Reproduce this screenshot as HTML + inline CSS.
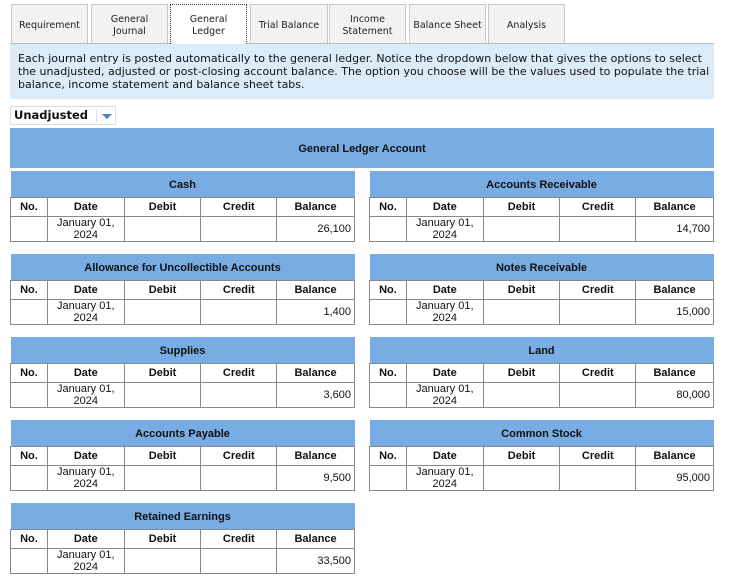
<!DOCTYPE html>
<html><head><style>
body{margin:0;background:#fff;width:731px;height:577px;position:relative;font-family:"Liberation Sans",Arial,sans-serif;overflow:hidden}
.tab{position:absolute;top:4px;height:39px;background:#f2f2f2;border:1px solid #c8c8c8;border-bottom:none;font-family:"DejaVu Sans",sans-serif;font-size:9.5px;color:#222;display:flex;align-items:center;justify-content:center;text-align:center;line-height:12px;box-sizing:border-box;padding-top:3px}
.tab.act{background:#fff;border:1px dotted #445;border-bottom:none;height:40px;z-index:2}
.line{position:absolute;left:10px;top:43px;width:704px;border-top:1px solid #bbb}
.info{position:absolute;left:10px;top:44px;height:55px;background:#dbecf8;font-family:"DejaVu Sans",sans-serif;font-size:11px;line-height:13px;color:#111;padding:8px 0 0 8px;box-sizing:border-box;width:704px}
.dd{position:absolute;left:10px;top:106px;width:106px;height:19px;border:1px solid #ddd;box-sizing:border-box;font-family:"DejaVu Sans",sans-serif;font-weight:bold;font-size:11.5px;padding:1px 0 0 3px;color:#111}
.dd .sep{position:absolute;left:85px;top:2px;width:1px;height:13px;background:#ddd}
.dd .arr{position:absolute;left:91px;top:7px;border-left:5px solid transparent;border-right:5px solid transparent;border-top:5px solid #4a7ec0}
.mh{position:absolute;left:10px;top:128px;width:704px;height:40px;background:#78ace3;font-weight:bold;font-size:11px;text-align:center;line-height:42px;color:#111}
table{position:absolute;border-collapse:collapse;width:345px;font-size:11px;color:#111}
td,th{border:1px solid #888;padding:0}
.t th{background:#78ace3;height:24px;border:none;font-weight:bold;border-bottom:1px solid #888;padding-top:2px}
.c td{height:18px;text-align:center;font-weight:bold}
.d td{height:24px;text-align:center;line-height:12px}
.d td.b{text-align:right;padding-right:3px}
</style></head><body>
<div class="tab" style="left:11px;width:77px">Requirement</div>
<div class="tab" style="left:91px;width:77px">General<br>Journal</div>
<div class="tab act" style="left:170px;width:77px">General<br>Ledger</div>
<div class="tab" style="left:250px;width:78px">Trial Balance</div>
<div class="tab" style="left:329px;width:77px">Income<br>Statement</div>
<div class="tab" style="left:409px;width:77px">Balance Sheet</div>
<div class="tab" style="left:488px;width:77px">Analysis</div>
<div class="line"></div>
<div class="info">Each journal entry is posted automatically to the general ledger. Notice the dropdown below that gives the options to select the unadjusted, adjusted or post-closing account balance. The option you choose will be the values used to populate the trial balance, income statement and balance sheet tabs.</div>
<div class="dd">Unadjusted<div class="sep"></div><div class="arr"></div></div>
<div class="mh">General Ledger Account</div>
<div id="tables"></div>
<script>
var acc=[["Cash","26,100"],["Accounts Receivable","14,700"],["Allowance for Uncollectible Accounts","1,400"],["Notes Receivable","15,000"],["Supplies","3,600"],["Land","80,000"],["Accounts Payable","9,500"],["Common Stock","95,000"],["Retained Earnings","33,500"]];
var h="";
acc.forEach(function(a,i){var x=i%2?369:10,y=171+Math.floor(i/2)*83;
h+='<table style="left:'+x+'px;top:'+y+'px"><colgroup><col style="width:37px"><col style="width:77px"><col style="width:77px"><col style="width:76px"><col style="width:78px"></colgroup><tr class="t"><th colspan="5">'+a[0]+'</th></tr><tr class="c"><td>No.</td><td>Date</td><td>Debit</td><td>Credit</td><td>Balance</td></tr><tr class="d"><td></td><td>January 01,<br>2024</td><td></td><td></td><td class="b">'+a[1]+'</td></tr></table>';});
document.getElementById("tables").innerHTML=h;
</script>
</body></html>
